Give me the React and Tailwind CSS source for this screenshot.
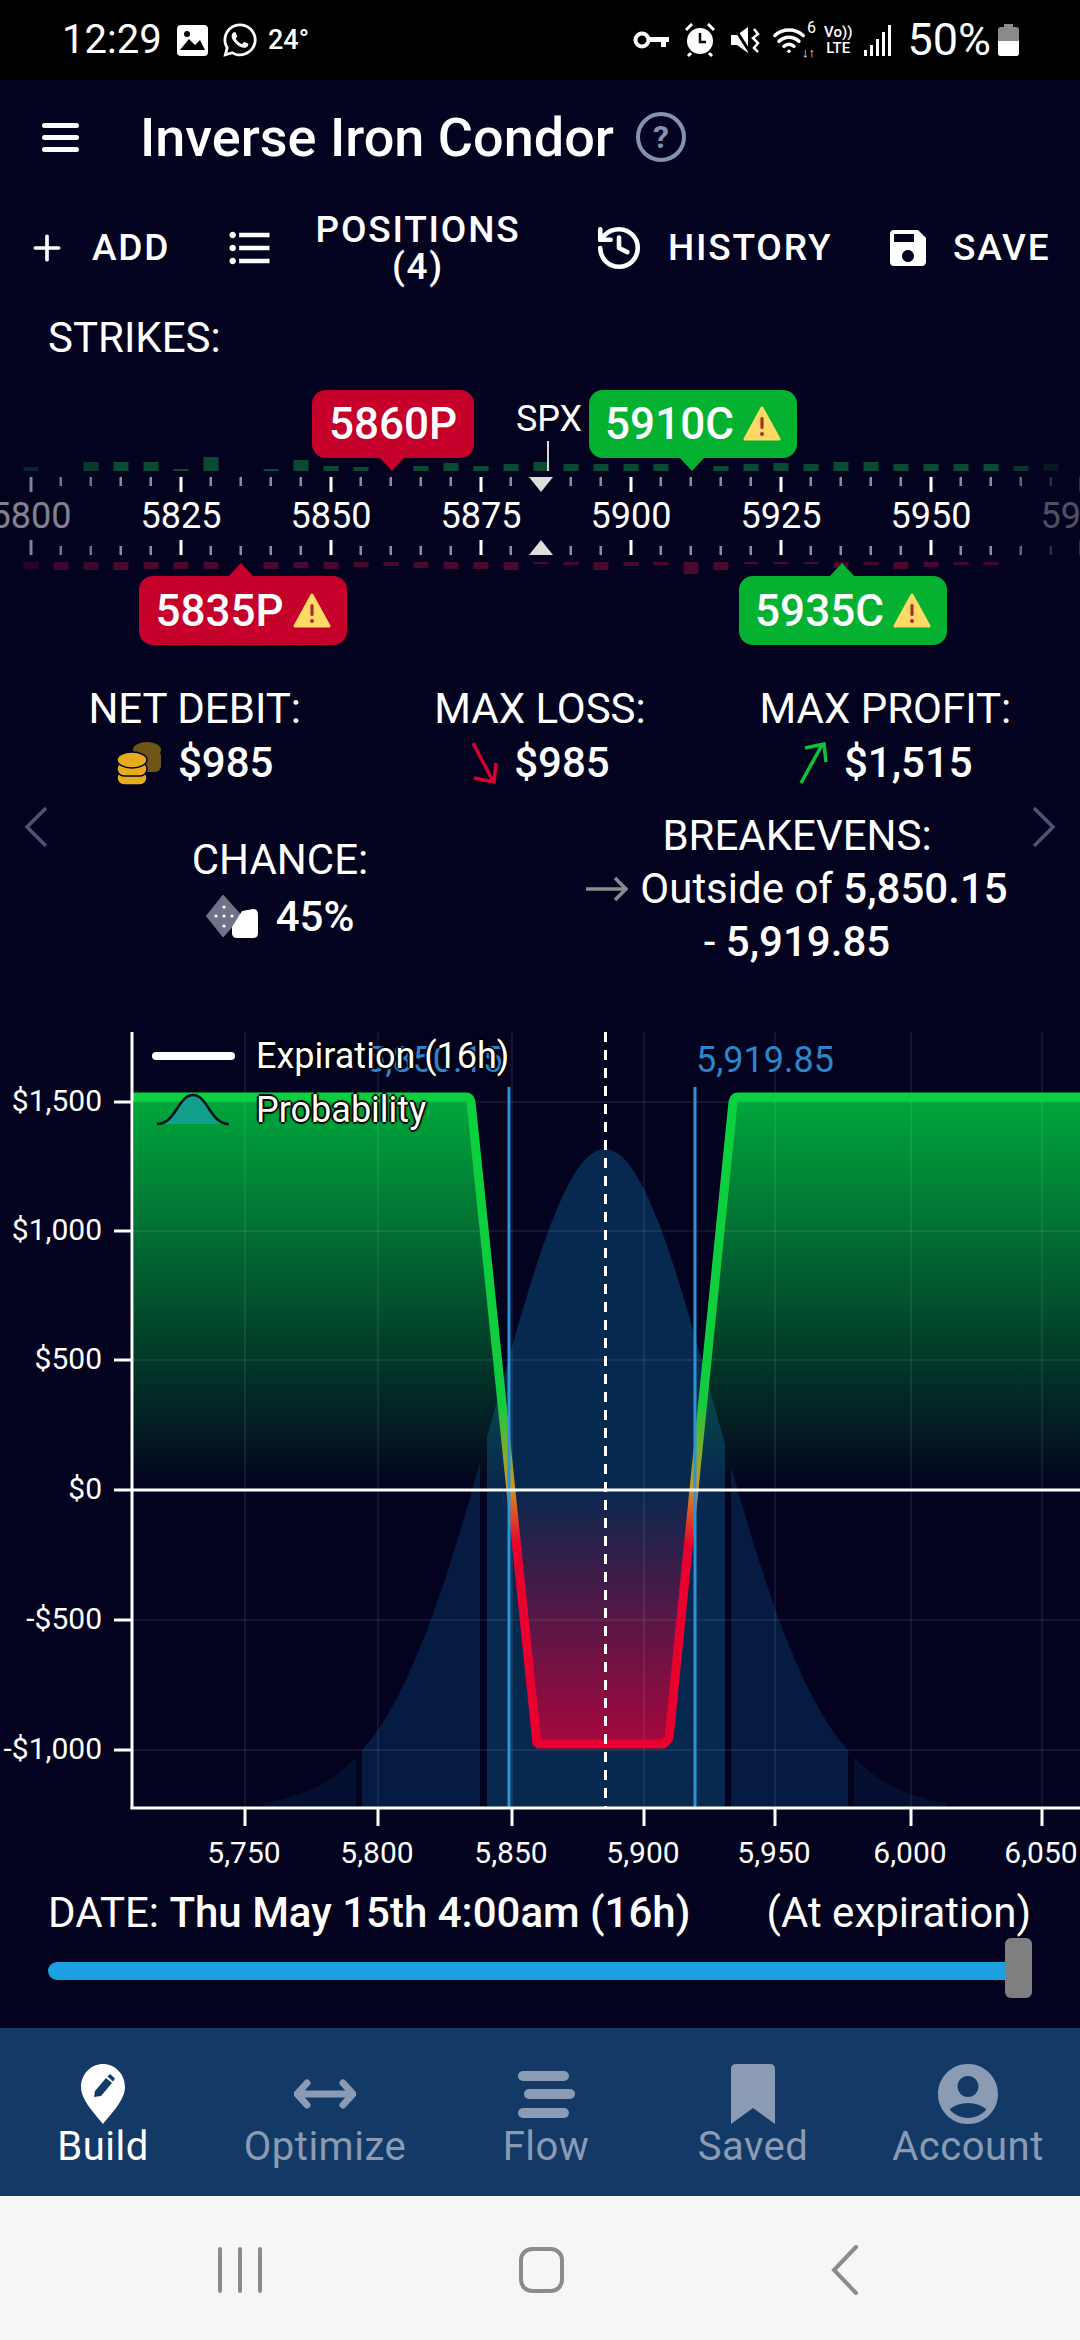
import React from "react";
import { Plus, History, Wifi } from "lucide-react";
import { MdSave, MdAccountCircle, MdFormatListBulleted } from "react-icons/md";
import { FaWhatsapp } from "react-icons/fa";

const greenBars = [4, 0, 9, 9, 9, 2, 14, 0, 2, 11, 5, 4, 0, 5, 8, 5, 7, 9, 7, 7, 7, 7, 0, 5, 7, 8, 7, 9, 9, 7, 7, 7, 7, 5, 7, 0];
const redBars = [7, 8, 8, 8, 7, 7, 7, 0, 7, 6, 7, 5, 4, 6, 7, 7, 8, 2, 3, 8, 4, 3, 12, 8, 2, 2, 2, 6, 3, 7, 5, 3, 3, 0, 0, 0];

const fade = (x) => {
  if (x < 60) return 0.5;
  if (x < 100) return 0.8;
  if (x > 1040) return 0.3;
  if (x > 1000) return 0.7;
  return 1;
};

const WarnIcon = () => (
  <svg width="38" height="36" viewBox="0 0 38 36" className="ml-[9px] shrink-0">
    <path d="M19 2 L36 33 H2 Z" fill="#ffd966" stroke="#ffd966" strokeWidth="3" strokeLinejoin="round" />
    <rect x="17.4" y="11" width="3.2" height="12" rx="1.5" fill="#a3302a" />
    <circle cx="19" cy="28" r="2" fill="#a3302a" />
  </svg>
);

const StrikeTag = ({ label, warn, color, left, top, width, tipLeft, tipUp }) => (
  <div
    className={`absolute flex items-center justify-center rounded-[14px] text-[44px] font-medium text-white ${color}`}
    style={{ left, top, width, height: tipUp ? 69 : 68 }}
  >
    <span>{label}</span>
    {warn && <WarnIcon />}
    <svg
      width="26"
      height="14"
      viewBox="0 0 26 14"
      className={`absolute ${tipUp ? "top-[-13px]" : "bottom-[-13px]"}`}
      style={{ left: tipLeft - 13 }}
    >
      <path d={tipUp ? "M13 0 L26 14 H0 Z" : "M0 0 H26 L13 14 Z"} fill={color === "bg-[#c4002b]" ? "#c4002b" : "#05b131"} />
    </svg>
  </div>
);

const StrikeRail = () => {
  const ticks = [];
  for (let i = 0; i < 36; i++) ticks.push(31 + i * 30);
  return (
    <div className="relative h-[284px] overflow-hidden">
      <svg width="1080" height="284" viewBox="0 376 1080 284" className="block">
        {ticks.map((x, i) => {
          const major = i % 5 === 0;
          return (
            <g key={x} opacity={fade(x)}>
              {greenBars[i] > 0 && <rect x={x - 7.5} y={471 - greenBars[i]} width="15" height={greenBars[i]} fill="#0a4a32" />}
              {redBars[i] > 0 && <rect x={x - 7.5} y="562" width="15" height={redBars[i]} fill="#4a082e" />}
              <rect x={x - 1.5} y="477" width={major ? 3 : 2.5} height={major ? 15 : 9} fill={major ? "#ffffff" : "#8f8f9c"} />
              <rect x={x - 1.5} y={major ? 540 : 546} width={major ? 3 : 2.5} height={major ? 15 : 9} fill={major ? "#ffffff" : "#8f8f9c"} />
              {major && (
                <text x={x} y="528" textAnchor="middle" fontSize="36" fill="#ffffff" fontFamily="Roboto, sans-serif">
                  {5800 + i * 5}
                </text>
              )}
            </g>
          );
        })}
        <rect x="547" y="441" width="2" height="30" fill="#d8d8d8" />
        <path d="M529 477 H553 L541 492 Z" fill="#dddddd" />
        <path d="M529 555 H553 L541 540 Z" fill="#dddddd" />
        <text x="549" y="431" textAnchor="middle" fontSize="36" fill="#ffffff" fontFamily="Roboto, sans-serif">
          SPX
        </text>
      </svg>
      <StrikeTag label="5860P" color="bg-[#c4002b]" left={312} top={14} width={162} tipLeft={80} />
      <StrikeTag label="5910C" warn color="bg-[#05b131]" left={589} top={14} width={208} tipLeft={103} />
      <StrikeTag label="5835P" warn tipUp color="bg-[#c4002b]" left={139} top={200} width={208} tipLeft={102} />
      <StrikeTag label="5935C" warn tipUp color="bg-[#05b131]" left={739} top={200} width={208} tipLeft={103} />
    </div>
  );
};

const Coins = () => (
  <svg width="46" height="46" viewBox="0 0 46 46" className="shrink-0">
    <g fill="#6e5518">
      <ellipse cx="31" cy="10" rx="14" ry="8" />
      <rect x="17" y="10" width="28" height="22" rx="6" />
    </g>
    <g fill="#e9ac1c" stroke="#03031f" strokeWidth="1.5">
      <rect x="1" y="31" width="30" height="14" rx="7" />
      <rect x="1" y="22" width="30" height="14" rx="7" />
      <ellipse cx="16" cy="20" rx="15" ry="8" />
    </g>
  </svg>
);

const Dice = () => (
  <svg width="54" height="44" viewBox="0 0 54 44" className="shrink-0">
    <path d="M17 1 L35 21 L17 41 L1 21 Z" fill="#6f7488" stroke="#6f7488" strokeWidth="2" strokeLinejoin="round" />
    <g fill="#ffffff">
      <circle cx="10" cy="21" r="1.6" />
      <circle cx="18" cy="21" r="1.6" />
      <circle cx="26" cy="21" r="1.6" />
      <circle cx="18" cy="12" r="1.6" />
      <circle cx="18" cy="31" r="1.6" />
    </g>
    <path d="M36 16 L47 14 Q52 14 52 20 V38 Q52 43 47 43 H31 Q26 43 26 38 V32 Z" fill="#ffffff" />
  </svg>
);

const StatBlock = ({ label, icon, value, gap = "gap-[16px]" }) => (
  <div className="flex flex-col items-center text-[42px] leading-[54px]">
    <span>{label}</span>
    <div className={`flex items-center font-medium ${gap}`}>
      {icon}
      <span>{value}</span>
    </div>
  </div>
);

const Stats = () => (
  <div className="relative h-[360px] pt-[22px] text-white">
    <div className="grid grid-cols-3 px-[22px]">
      <StatBlock label="NET DEBIT:" value="$985" icon={<Coins />} />
      <StatBlock
        label="MAX LOSS:"
        value="$985"
        icon={
          <svg width="28" height="42" viewBox="0 0 28 42" className="shrink-0">
            <path d="M3 1 L23 39 M4 36 L24 40 L26 21" fill="none" stroke="#d60032" strokeWidth="3.5" />
          </svg>
        }
      />
      <StatBlock
        label="MAX PROFIT:"
        value="$1,515"
        icon={
          <svg width="30" height="42" viewBox="0 0 30 42" className="shrink-0">
            <path d="M3 41 L24 3 M7 6 L26 2 L28 20" fill="none" stroke="#10c13b" strokeWidth="3.5" />
          </svg>
        }
      />
    </div>
    <div className="grid grid-cols-[560px_474px] mt-[19px]">
      <div className="pt-[22px] flex flex-col items-center text-[42px] leading-[57px]">
        <span>CHANCE:</span>
        <div className="flex items-center gap-[16px] font-medium">
          <Dice />
          <span>45%</span>
        </div>
      </div>
      <div className="text-center text-[42px] leading-[53px]">
        <div>BREAKEVENS:</div>
        <div className="flex items-center justify-center gap-[12px]">
          <svg width="42" height="26" viewBox="0 0 42 26" className="shrink-0">
            <path d="M0 13 H40 M29 2 L40 13 L29 24" fill="none" stroke="#8a8a8a" strokeWidth="3.5" />
          </svg>
          <span>
            Outside of <span className="font-medium">5,850.15</span>
          </span>
        </div>
        <div>
          - <span className="font-medium">5,919.85</span>
        </div>
      </div>
    </div>
    <svg width="24" height="42" viewBox="0 0 24 42" className="absolute left-[24px] top-[146px]">
      <path d="M22 2 L3 21 L22 40" fill="none" stroke="#4c5472" strokeWidth="3.5" />
    </svg>
    <svg width="24" height="42" viewBox="0 0 24 42" className="absolute left-[1032px] top-[146px]">
      <path d="M2 2 L21 21 L2 40" fill="none" stroke="#4c5472" strokeWidth="3.5" />
    </svg>
  </div>
);

const bellY = (x) => 1808 - 659 * Math.exp(-((x - 605) ** 2) / (2 * 110 * 110));

const bellPath = (from, to) => {
  let d = `M${from} 1808`;
  for (let x = from; x <= to; x += 4) d += ` L${x} ${bellY(x).toFixed(1)}`;
  d += ` L${to} ${bellY(to).toFixed(1)} L${to} 1808 Z`;
  return d;
};

const yLabels = [
  ["$1,500", 1102],
  ["$1,000", 1231],
  ["$500", 1360],
  ["$0", 1490],
  ["-$500", 1620],
  ["-$1,000", 1750],
];
const xLabels = [
  ["5,750", 245],
  ["5,800", 378],
  ["5,850", 512],
  ["5,900", 644],
  ["5,950", 775],
  ["6,000", 911],
  ["6,050", 1042],
];

const Chart = () => (
  <div className="relative h-[860px]">
    <svg width="1080" height="860" viewBox="0 1020 1080 860" className="block">
      <defs>
        <linearGradient id="pnlFill" gradientUnits="userSpaceOnUse" x1="0" y1="1097" x2="0" y2="1747">
          <stop offset="0" stopColor="#00a83c" />
          <stop offset="0.6" stopColor="#00a83c" stopOpacity="0" />
          <stop offset="0.6" stopColor="#c4003a" stopOpacity="0" />
          <stop offset="1" stopColor="#c4003a" stopOpacity="0.85" />
        </linearGradient>
        <linearGradient id="pnlLine" gradientUnits="userSpaceOnUse" x1="0" y1="1097" x2="0" y2="1747">
          <stop offset="0" stopColor="#0bd13f" />
          <stop offset="0.47" stopColor="#12cc3c" />
          <stop offset="0.6" stopColor="#cf9420" />
          <stop offset="0.69" stopColor="#e8002e" />
          <stop offset="1" stopColor="#e8002e" />
        </linearGradient>
      </defs>

      <path d={bellPath(264, 356)} fill="#050f30" />
      <path d={bellPath(362, 480)} fill="#061b42" />
      <path d={bellPath(487, 725)} fill="#07284f" />
      <path d={bellPath(731, 848)} fill="#061b42" />
      <path d={bellPath(854, 946)} fill="#050f30" />

      <path d="M134 1097 H470 L510 1490 H134 Z" fill="url(#pnlFill)" />
      <path d="M694 1490 L734 1097 H1080 V1490 Z" fill="url(#pnlFill)" />
      <path d="M510 1490 L537 1744 H664 L669 1738 L694 1490 Z" fill="url(#pnlFill)" />

      {xLabels.map(([label, x]) => (
        <g key={label}>
          <rect x={x - 1} y="1032" width="2" height="776" fill="#ffffff" opacity="0.07" />
          <rect x={x - 1.5} y="1808" width="3" height="18" fill="#ffffff" />
          <text x={x - 1} y="1863" textAnchor="middle" fontSize="30" fill="#ffffff" fontFamily="Roboto, sans-serif">
            {label}
          </text>
        </g>
      ))}
      {yLabels.map(([label, y]) => (
        <g key={label}>
          <rect x="132" y={y - 1} width="948" height="2" fill="#ffffff" opacity="0.07" />
          <rect x="114" y={y - 1.5} width="18" height="3" fill="#ffffff" />
          <text x="102" y={y + 9} textAnchor="end" fontSize="30" fill="#ffffff" fontFamily="Roboto, sans-serif">
            {label}
          </text>
        </g>
      ))}

      <path
        d="M132 1097 H466 Q470 1097 471 1102 L537 1744 H664 L669 1738 L733 1102 Q734 1097 738 1097 H1080"
        fill="none"
        stroke="url(#pnlLine)"
        strokeWidth="9"
        strokeLinejoin="bevel"
      />

      <rect x="507.5" y="1087" width="3" height="721" fill="#2e92d6" />
      <rect x="693.5" y="1087" width="3" height="721" fill="#2e92d6" />
      <line x1="605.5" y1="1032" x2="605.5" y2="1808" stroke="#ffffff" strokeWidth="3" strokeDasharray="10 8" />
      <rect x="132" y="1488.5" width="948" height="3" fill="#ffffff" />
      <rect x="130.5" y="1032" width="3" height="777" fill="#ffffff" />
      <rect x="130.5" y="1806.5" width="950" height="3" fill="#ffffff" />

      <text x="503" y="1072" textAnchor="end" fontSize="36" fill="#2e86c8" fontFamily="Roboto, sans-serif">
        5,850.15
      </text>
      <text x="696" y="1072" fontSize="36" fill="#2e86c8" fontFamily="Roboto, sans-serif">
        5,919.85
      </text>
    </svg>

    <div className="absolute left-[152px] top-[16px] text-[36px] text-white [text-shadow:-2px_0_1px_#000,2px_0_1px_#000,0_-2px_1px_#000,0_2px_1px_#000]">
      <div className="flex items-center h-[40px]">
        <div className="w-[83px] h-[8px] rounded-full bg-white mr-[21px]" />
        <span>Expiration (16h)</span>
      </div>
      <div className="flex items-center h-[40px] mt-[14px]">
        <svg width="83" height="34" viewBox="0 0 83 34" className="mr-[21px] shrink-0">
          <path d="M5 31 C24 31 26 2 41 2 C56 2 58 31 77 31 Z" fill="#12a08c" />
          <path d="M5 31 C24 31 26 2 41 2 C56 2 58 31 77 31" fill="none" stroke="#04121c" strokeWidth="2.5" />
        </svg>
        <span>Probability</span>
      </div>
    </div>
  </div>
);

const navItems = [
  {
    label: "Build",
    active: true,
    icon: (
      <svg width="44" height="60" viewBox="0 0 44 60">
        <path d="M22 0 C34 0 44 10 44 23 C44 36 30 50 22 60 C14 50 0 36 0 23 C0 10 10 0 22 0 Z" fill="#ffffff" />
        <path d="M13 33 L14 27 L25 14 L31 19 L20 32 Z" fill="#133a66" />
        <path d="M26.5 12.5 L29 10 L34 14.5 L32 17.5 Z" fill="#133a66" />
      </svg>
    ),
  },
  {
    label: "Optimize",
    icon: (
      <svg width="62" height="60" viewBox="0 0 62 60">
        <path d="M13 19 L3 30 L13 41 M49 19 L59 30 L49 41 M6 30 H56" fill="none" stroke="#8a9bb3" strokeWidth="7" strokeLinecap="round" strokeLinejoin="round" />
      </svg>
    ),
  },
  {
    label: "Flow",
    icon: (
      <svg width="62" height="60" viewBox="0 0 62 60">
        <rect x="3" y="7" width="51" height="10" rx="5" fill="#8a9bb3" />
        <rect x="9" y="25" width="51" height="10" rx="5" fill="#8a9bb3" />
        <rect x="3" y="44" width="51" height="10" rx="5" fill="#8a9bb3" />
      </svg>
    ),
  },
  {
    label: "Saved",
    icon: (
      <svg width="46" height="60" viewBox="0 0 46 60">
        <path d="M6 0 H40 Q45 0 45 5 V60 L23 44 L1 60 V5 Q1 0 6 0 Z" fill="#8a9bb3" />
      </svg>
    ),
  },
  {
    label: "Account",
    icon: <MdAccountCircle size={72} color="#8a9bb3" className="my-[-6px]" />,
  },
];

const BottomNav = () => (
  <div className="grid grid-cols-[206px_238px_204px_210px_220px] h-[168px] bg-[#133a66] pt-[36px]">
    {navItems.map((item) => (
      <div key={item.label} className="flex flex-col items-center">
        {item.icon}
        <span className={`mt-[2px] text-[40px] leading-[42px] tracking-[0.5px] ${item.active ? "text-white" : "text-[#8a9bb3]"}`}>
          {item.label}
        </span>
      </div>
    ))}
  </div>
);

const StatusBar = () => (
  <div className="flex items-center justify-between h-[80px] bg-black text-white pl-[62px] pr-[61px]">
    <div className="flex items-center">
      <span className="text-[40px] w-[115px]">12:29</span>
      <svg width="31" height="31" viewBox="0 0 31 31" className="mr-[13px]">
        <rect width="31" height="31" rx="4" fill="#fff" />
        <path d="M3 25 L12 14 L18 20 L23 15 L28 25 Z" fill="#000" />
        <circle cx="10" cy="9" r="3" fill="#000" />
      </svg>
      <FaWhatsapp size={38} className="mr-[9px]" />
      <span className="text-[27px] font-medium">24°</span>
    </div>
    <div className="flex items-center">
      <svg width="37" height="22" viewBox="0 0 37 20" className="mr-[14px]">
        <circle cx="9" cy="10" r="6.5" fill="none" stroke="#fff" strokeWidth="4" />
        <path d="M15 7 H36 V12 H33 V17 H28 V12 H15 Z" fill="#fff" />
      </svg>
      <svg width="32" height="34" viewBox="0 0 32 34" className="mr-[13px]">
        <circle cx="16" cy="18" r="13" fill="#fff" />
        <path d="M16 10 V19 H22" fill="none" stroke="#000" strokeWidth="2.5" />
        <path d="M2 7 L8 1 M30 7 L24 1 M7 30 L4 33 M25 30 L28 33" stroke="#fff" strokeWidth="3" />
      </svg>
      <svg width="32" height="32" viewBox="0 0 32 32" className="mr-[11px]">
        <path d="M2 11 H8 L19 3 V29 L8 21 H2 Z" fill="#fff" />
        <path d="M5 3 L22 30" stroke="#000" strokeWidth="3" />
        <path d="M25 5 L29 10 L24 14 L29 19 L25 24 L29 28" fill="none" stroke="#fff" strokeWidth="2.5" />
      </svg>
      <div className="relative w-[44px] h-[36px] mr-[8px]">
        <Wifi size={34} strokeWidth={2.5} className="absolute left-0 top-[1px]" />
        <span className="absolute right-0 top-[-3px] text-[16px] leading-[18px]">6</span>
        <span className="absolute right-[1px] bottom-[-2px] text-[13px] leading-[14px]">↓↑</span>
      </div>
      <div className="flex flex-col items-center text-[15px] leading-[16px] font-medium mr-[12px]">
        <span>Vo))</span>
        <span>LTE</span>
      </div>
      <svg width="28" height="31" viewBox="0 0 28 31" className="mr-[15px]">
        <rect x="0" y="25" width="3" height="6" fill="#fff" />
        <rect x="6" y="20" width="3" height="11" fill="#fff" />
        <rect x="12" y="14" width="3" height="17" fill="#fff" />
        <rect x="18" y="7" width="3" height="24" fill="#fff" />
        <rect x="24" y="0" width="3" height="31" fill="#fff" />
      </svg>
      <span className="text-[45px] mr-[7px]">50%</span>
      <svg width="21" height="32" viewBox="0 0 21 32">
        <rect x="6" y="0" width="9" height="4" fill="#8a8a8a" />
        <rect x="0" y="3" width="21" height="29" rx="3" fill="#8a8a8a" />
        <path d="M0 17 H21 V29 Q21 32 18 32 H3 Q0 32 0 29 Z" fill="#fff" />
      </svg>
    </div>
  </div>
);

const Toolbar = () => (
  <div className="h-[106px] pt-[2px] text-white text-[37px] font-medium tracking-[1.8px]">
    <div className="flex items-center h-full">
      <Plus size={40} strokeWidth={2.2} className="ml-[27px] mr-[25px]" />
      <span className="w-[138px]">ADD</span>
      <MdFormatListBulleted size={52} className="ml-[-6px] mr-[39px]" />
      <div className="text-center leading-[37px] w-[206px]">
        <div>POSITIONS</div>
        <div>(4)</div>
      </div>
      <History size={50} strokeWidth={2.2} className="ml-[73px] mr-[24px]" />
      <span className="w-[222px]">HISTORY</span>
      <MdSave size={48} className="ml-[-6px] mr-[21px]" />
      <span>SAVE</span>
    </div>
  </div>
);

export default function App() {
  return (
    <div className="w-[1080px] h-[2340px] overflow-hidden bg-[#03031f] text-white font-['Roboto',sans-serif]">
      <StatusBar />

      <div className="flex items-center h-[114px]">
        <div className="flex flex-col gap-[7px] ml-[42px] mr-[61px]">
          <div className="w-[37px] h-[5px] rounded-sm bg-white" />
          <div className="w-[37px] h-[5px] rounded-sm bg-white" />
          <div className="w-[37px] h-[5px] rounded-sm bg-white" />
        </div>
        <span className="text-[54px] font-medium">Inverse Iron Condor</span>
        <div className="flex items-center justify-center w-[50px] h-[50px] ml-[22px] rounded-full border-[4px] border-[#8492b0] text-[32px] font-bold text-[#8492b0]">
          ?
        </div>
      </div>

      <Toolbar />

      <div className="h-[76px] pl-[48px] pt-[16px] text-[42px] leading-[44px]">STRIKES:</div>

      <StrikeRail />
      <Stats />
      <Chart />

      <div className="flex justify-between h-[58px] pl-[48px] pr-[49px] text-[42px] leading-[66px]">
        <span>
          DATE: <span className="font-medium">Thu May 15th 4:00am (16h)</span>
        </span>
        <span>(At expiration)</span>
      </div>

      <div className="relative h-[90px]">
        <div className="absolute left-[48px] top-[24px] w-[958px] h-[18px] rounded-l-full bg-[#1ba0e2]" />
        <div className="absolute left-[1005px] top-0 w-[27px] h-[60px] rounded-md bg-[#7f7f7f]" />
      </div>

      <BottomNav />

      <div className="relative flex h-[144px] items-center bg-[#f6f6f6]">
        <div className="absolute left-[218px] top-[51px] flex gap-[16px]">
          <div className="w-[4px] h-[46px] rounded-sm bg-[#8b8b8b]" />
          <div className="w-[4px] h-[46px] rounded-sm bg-[#8b8b8b]" />
          <div className="w-[4px] h-[46px] rounded-sm bg-[#8b8b8b]" />
        </div>
        <div className="absolute left-[519px] top-[51px] w-[45px] h-[46px] rounded-[13px] border-[4px] border-[#8b8b8b]" />
        <svg width="30" height="50" viewBox="0 0 30 50" className="absolute left-[830px] top-[49px]">
          <path d="M26 2 L4 25 L26 48" fill="none" stroke="#8b8b8b" strokeWidth="4" strokeLinecap="round" />
        </svg>
      </div>
    </div>
  );
}
